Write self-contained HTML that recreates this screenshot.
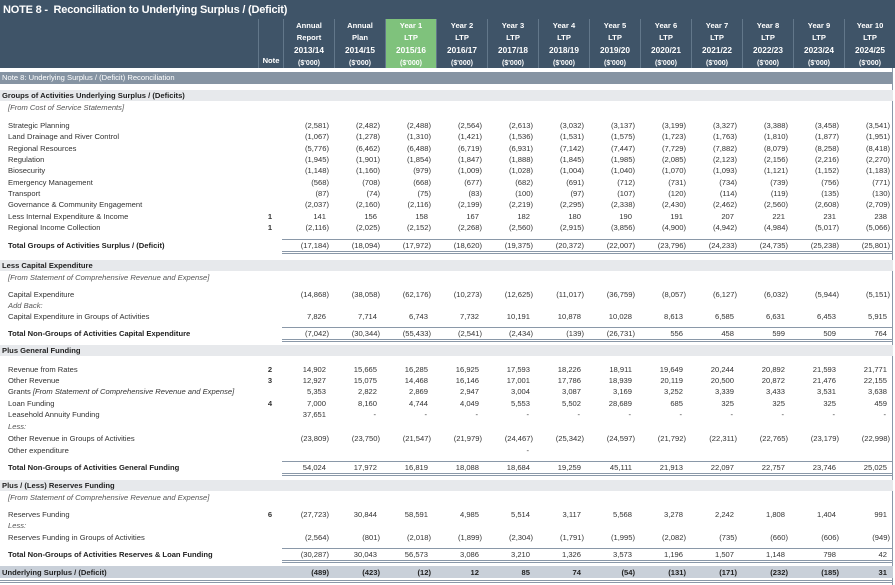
<!DOCTYPE html>
<html><head><meta charset="utf-8"><style>
*{margin:0;padding:0;box-sizing:border-box}
body{width:895px;height:585px;overflow:hidden;background:#fff;font-family:"Liberation Sans",sans-serif;font-size:7.6px;color:#333;position:relative}
.abs{position:absolute}
#title{left:0;top:0;width:895px;height:19px;background:#3f5468;color:#fff;font-size:11px;font-weight:bold;padding:4px 0 0 3px;letter-spacing:-0.2px}
#hdr{left:0;top:19px;width:895px;height:49px;background:#3f5468}
.hc{position:absolute;top:0;height:49px;border-left:1px solid #62778a;color:#fff;font-weight:bold;text-align:center;font-size:7.6px;line-height:12px;padding-top:1px}
.band{position:absolute;left:0;width:893px}
.row{position:absolute;left:0;width:893px;height:11px;line-height:11px}
.lbl{position:absolute;left:8px;white-space:nowrap}
.sec{left:2px;font-weight:bold;color:#222}
.it{font-style:italic;color:#555}
.nt{position:absolute;left:262px;width:16px;text-align:center;font-weight:bold}
.v{position:absolute;text-align:right;white-space:nowrap}
.b{font-weight:bold;color:#222}
.ln{position:absolute;left:282px;width:611px;height:1px;background:#8a98a8}
#frame{left:892px;top:68px;width:1px;height:517px;background:#8a98a8}
</style></head><body>
<div id="title" class="abs">NOTE 8 -&nbsp; Reconciliation to Underlying Surplus / (Deficit)</div>
<div id="hdr" class="abs"></div>
<div class="band" style="top:72px;height:12px;background:#8694a3;color:#fff;line-height:12px;padding-left:2px">Note 8: Underlying Surplus / (Deficit) Reconciliation</div>
<div id="frame" class="abs"></div>
<div id="root"></div>
<script>
var L=[258,283];for(var i=1;i<=12;i++)L.push(283+i*51);L[14]=893;
var H=document.getElementById('hdr'),s='';
s+='<div class="hc" style="left:258px;width:25px;"><div style="position:absolute;bottom:1px;width:100%">Note</div></div>';
var heads=[['Annual','Report','2013/14'],['Annual','Plan','2014/15']];
for(var y=1;y<=10;y++)heads.push(['Year '+y,'LTP',(2014+y)+'/'+(15+y)]);
for(var c=0;c<12;c++){var x=L[c+1],w=L[c+2]-x;
s+='<div class="hc" style="left:'+x+'px;width:'+w+'px;'+(c==2?'background:#7fc27c;':'')+'">'+heads[c][0]+'<br>'+heads[c][1]+'<br><span style="font-size:8.3px">'+heads[c][2]+'</span><br><span style="font-size:7px">($\'000)</span></div>';}
H.innerHTML=s;
var R=document.getElementById('root'),o='';
function band(t,txt,bg,h){o+='<div class="band" style="top:'+t+'px;height:'+(h||11)+'px;background:'+bg+'"></div>';if(txt)o+='<div class="row" style="top:'+t+'px"><span class="lbl sec">'+txt+'</span></div>';}
function row(cy,lbl,cls,note,vals,bold){o+='<div class="row" style="top:'+(cy-5.5)+'px"><span class="lbl '+(cls||'')+'">'+lbl+'</span>';
if(note)o+='<span class="nt">'+note+'</span>';
if(vals)for(var c=0;c<12;c++){var v=vals[c];if(v===null||v===undefined)continue;var neg=v.charAt(0)=='(';var dash=v=='-';
var r=893-L[c+2]+(neg?5:(dash?9:8));o+='<span class="v'+(bold?' b':'')+'" style="right:'+r+'px">'+v+'</span>';}
o+='</div>';}
function tot(top){o+='<div class="ln" style="top:'+top+'px"></div>';}
function dbl(top){o+='<div class="ln" style="top:'+top+'px"></div><div class="ln" style="top:'+(top+2)+'px"></div>';}
function sp(t){return t.split(' ');}
band(90,'Groups of Activities Underlying Surplus / (Deficits)','#e7e9ec');
row(107,'[From Cost of Service Statements]','it');
var d=[
['Strategic Planning','','(2,581) (2,482) (2,488) (2,564) (2,613) (3,032) (3,137) (3,199) (3,327) (3,388) (3,458) (3,541)'],
['Land Drainage and River Control','','(1,067) (1,278) (1,310) (1,421) (1,536) (1,531) (1,575) (1,723) (1,763) (1,810) (1,877) (1,951)'],
['Regional Resources','','(5,776) (6,462) (6,488) (6,719) (6,931) (7,142) (7,447) (7,729) (7,882) (8,079) (8,258) (8,418)'],
['Regulation','','(1,945) (1,901) (1,854) (1,847) (1,888) (1,845) (1,985) (2,085) (2,123) (2,156) (2,216) (2,270)'],
['Biosecurity','','(1,148) (1,160) (979) (1,009) (1,028) (1,004) (1,040) (1,070) (1,093) (1,121) (1,152) (1,183)'],
['Emergency Management','','(568) (708) (668) (677) (682) (691) (712) (731) (734) (739) (756) (771)'],
['Transport','','(87) (74) (75) (83) (100) (97) (107) (120) (114) (119) (135) (130)'],
['Governance &amp; Community Engagement','','(2,037) (2,160) (2,116) (2,199) (2,219) (2,295) (2,338) (2,430) (2,462) (2,560) (2,608) (2,709)'],
['Less Internal Expenditure &amp; Income','1','141 156 158 167 182 180 190 191 207 221 231 238'],
['Regional Income Collection','1','(2,116) (2,025) (2,152) (2,268) (2,560) (2,915) (3,856) (4,900) (4,942) (4,984) (5,017) (5,066)']];
var ys=[125,136,148,159,170,182,193,204,216,227];
for(var i=0;i<d.length;i++)row(ys[i],d[i][0],'',d[i][1],sp(d[i][2]));
tot(239);row(245,'Total Groups of Activities Surplus / (Deficit)','b','',sp('(17,184) (18,094) (17,972) (18,620) (19,375) (20,372) (22,007) (23,796) (24,233) (24,735) (25,238) (25,801)'));dbl(251);
band(260,'Less Capital Expenditure','#e7e9ec');
row(277,'[From Statement of Comprehensive Revenue and Expense]','it');
row(294,'Capital Expenditure','','',sp('(14,868) (38,058) (62,176) (10,273) (12,625) (11,017) (36,759) (8,057) (6,127) (6,032) (5,944) (5,151)'));
row(305,'Add Back:','it');
row(316,'Capital Expenditure in Groups of Activities','','',sp('7,826 7,714 6,743 7,732 10,191 10,878 10,028 8,613 6,585 6,631 6,453 5,915'));
tot(327);row(333,'Total Non-Groups of Activities Capital Expenditure','b','',sp('(7,042) (30,344) (55,433) (2,541) (2,434) (139) (26,731) 556 458 599 509 764'));dbl(339);
band(345,'Plus General Funding','#e7e9ec');
row(369,'Revenue from Rates','','2',sp('14,902 15,665 16,285 16,925 17,593 18,226 18,911 19,649 20,244 20,892 21,593 21,771'));
row(380,'Other Revenue','','3',sp('12,927 15,075 14,468 16,146 17,001 17,786 18,939 20,119 20,500 20,872 21,476 22,155'));
row(391,'Grants <i>[From Statement of Comprehensive Revenue and Expense]</i>','','',sp('5,353 2,822 2,869 2,947 3,004 3,087 3,169 3,252 3,339 3,433 3,531 3,638'));
row(403,'Loan Funding','','4',sp('7,000 8,160 4,744 4,049 5,553 5,502 28,689 685 325 325 325 459'));
row(414,'Leasehold Annuity Funding','','',sp('37,651 - - - - - - - - - - -'));
row(426,'Less:','it');
row(438,'Other Revenue in Groups of Activities','','',sp('(23,809) (23,750) (21,547) (21,979) (24,467) (25,342) (24,597) (21,792) (22,311) (22,765) (23,179) (22,998)'));
row(450,'Other expenditure','','',[null,null,null,null,'-']);
tot(461);row(467,'Total Non-Groups of Activities General Funding','b','',sp('54,024 17,972 16,819 18,088 18,684 19,259 45,111 21,913 22,097 22,757 23,746 25,025'));dbl(473);
band(480,'Plus / (Less) Reserves Funding','#e7e9ec');
row(497,'[From Statement of Comprehensive Revenue and Expense]','it');
row(514,'Reserves Funding','','6',sp('(27,723) 30,844 58,591 4,985 5,514 3,117 5,568 3,278 2,242 1,808 1,404 991'));
row(525,'Less:','it');
row(537,'Reserves Funding in Groups of Activities','','',sp('(2,564) (801) (2,018) (1,899) (2,304) (1,791) (1,995) (2,082) (735) (660) (606) (949)'));
tot(548);row(554,'Total Non-Groups of Activities Reserves &amp; Loan Funding','b','',sp('(30,287) 30,043 56,573 3,086 3,210 1,326 3,573 1,196 1,507 1,148 798 42'));dbl(560);
band(566,'','#c9d0d9',12);
o+='<div class="row" style="top:566.5px"><span class="lbl sec">Underlying Surplus / (Deficit)</span></div>';
row(572.5,'','','',sp('(489) (423) (12) 12 85 74 (54) (131) (171) (232) (185) 31'),true);
o+='<div class="band" style="top:580px;height:1px;background:#8a98a8"></div><div class="band" style="top:582px;height:1px;background:#8a98a8"></div>';
R.innerHTML=o;
</script>
</body></html>
